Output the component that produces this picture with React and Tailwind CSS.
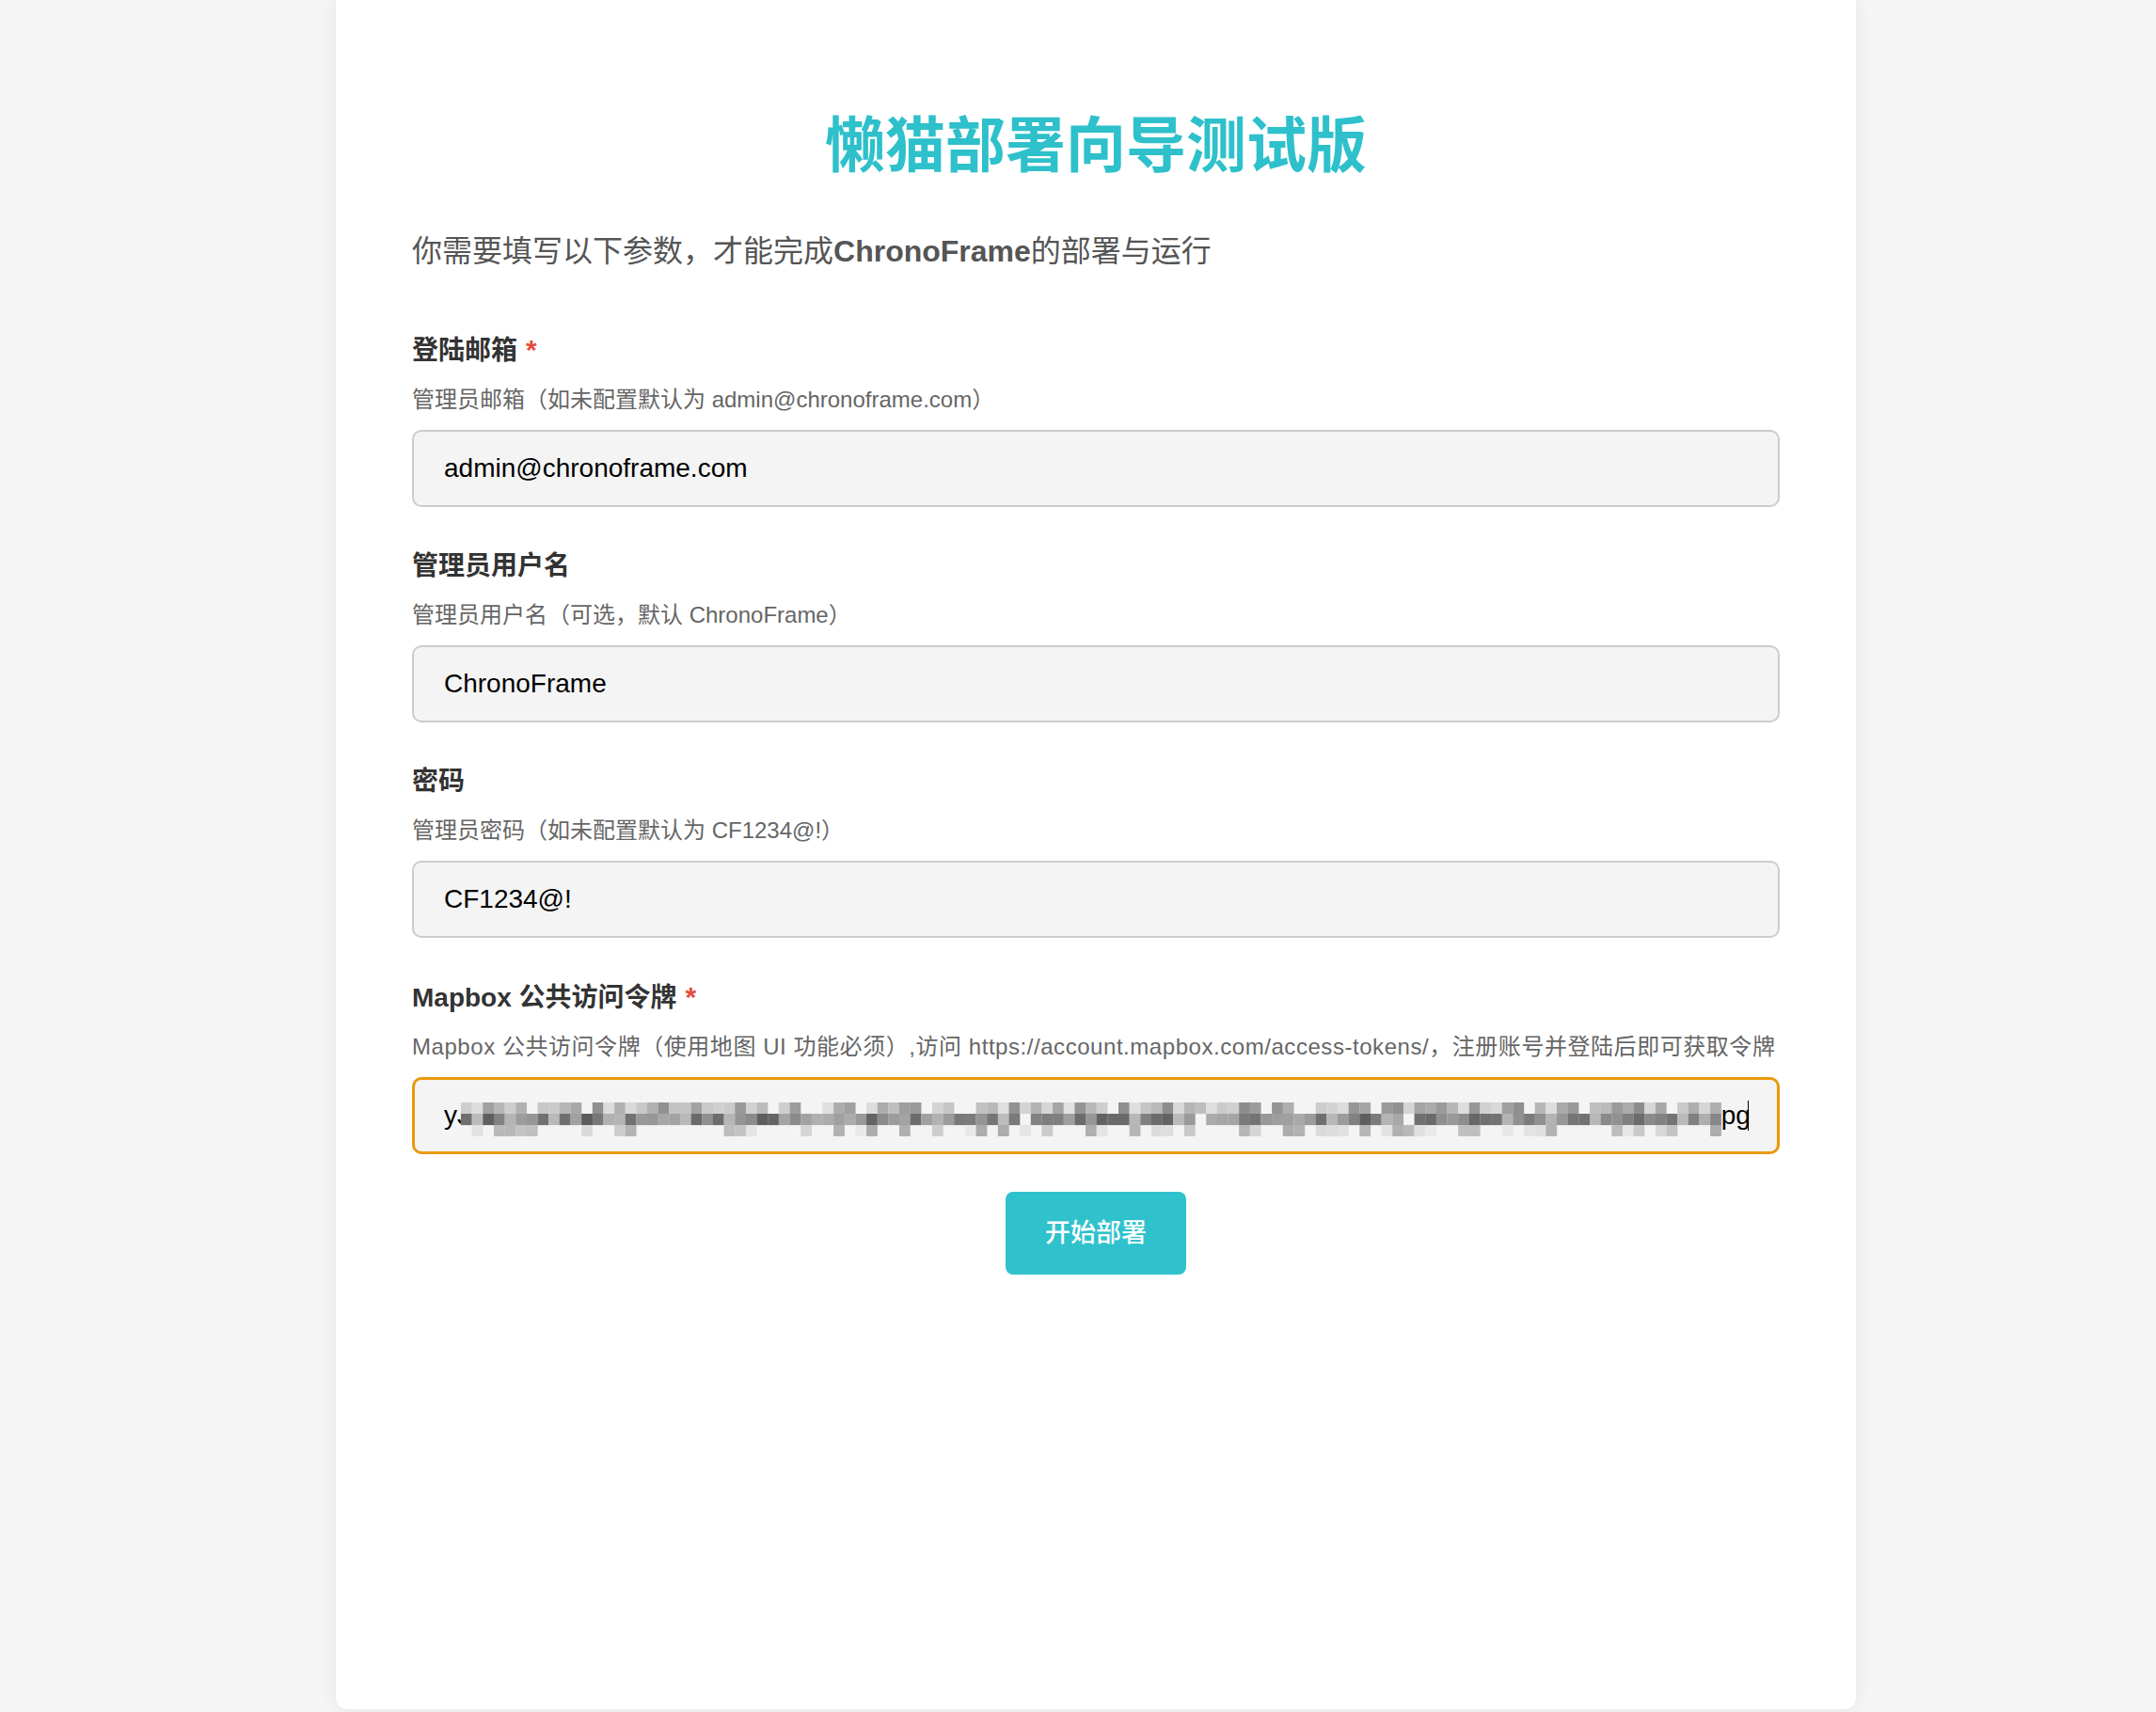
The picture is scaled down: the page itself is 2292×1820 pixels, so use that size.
import React from "react";

const font = "font-['Liberation_Sans','Noto_Sans_CJK_SC',sans-serif]";

// deterministic pseudo-random greys for the pixelated token
const makeMosaic = () => {
  let s = 20240611;
  const r = () => {
    s = (s * 1103515245 + 12345) % 2147483648;
    return s / 2147483648;
  };
  const cells = [];
  const cols = 115;
  for (let i = 0; i < cols; i++) {
    const top = r() < 0.82 ? Math.round(140 + r() * 85) : null;
    const mid = r() < 0.97 ? Math.round(90 + r() * 100) : null;
    const bot = r() < 0.4 ? Math.round(170 + r() * 65) : null;
    [top, mid, bot].forEach((v, row) => {
      if (v !== null) cells.push({ x: i * 11.65, y: row * 12, v });
    });
  }
  return { cells, width: cols * 11.65 };
};

const mosaic = makeMosaic();

const Mosaic = () => (
  <svg width={mosaic.width} height="36" className="block shrink-0 -ml-[10px]">
    {mosaic.cells.map((c, i) => (
      <rect key={i} x={c.x} y={c.y} width="11.8" height="12.1" fill={`rgb(${c.v},${c.v},${c.v})`} />
    ))}
  </svg>
);

const Label = ({ children, required }) => (
  <label className="block text-[28px] leading-[42px] font-bold text-[#333]">
    {children}
    {required && <span className="ml-[9px] text-[30px] text-[#e74c3c]">*</span>}
  </label>
);

const Hint = ({ children }) => (
  <p className="mt-[13px] text-[24px] leading-[36px] text-[#666]">{children}</p>
);

const Field = ({ label, hint, value, required, type = "text" }) => (
  <div className="mb-[42px]">
    <Label required={required}>{label}</Label>
    <Hint>{hint}</Hint>
    <input
      type={type}
      defaultValue={value}
      readOnly
      className={`${font} mt-[14px] block w-full h-[82px] rounded-[10px] border-2 border-[#cccccc] bg-[#f4f4f4] px-[32px] text-[28px] text-black outline-none`}
    />
  </div>
);

export default function App() {
  return (
    <div className={`${font} min-h-screen bg-[#f5f5f5]`}>
      <div className="ml-[357px] w-[1616px] h-[1817px] bg-white rounded-b-[12px] shadow-[0_0_18px_rgba(0,0,0,0.07)] px-[81px] pt-[117px]">
        <h1 className="text-center text-[64px] leading-[77px] font-bold text-[#2ec0cb]">懒猫部署向导测试版</h1>
        <p className="mt-[50px] text-[32px] leading-[46px] text-[#555]">
          你需要填写以下参数，才能完成<span className="font-bold">ChronoFrame</span>的部署与运行
        </p>

        <div className="mt-[61px]">
          <Field label="登陆邮箱" required hint="管理员邮箱（如未配置默认为 admin@chronoframe.com）" value="admin@chronoframe.com" />
          <Field label="管理员用户名" hint="管理员用户名（可选，默认 ChronoFrame）" value="ChronoFrame" />
          <Field label="密码" hint="管理员密码（如未配置默认为 CF1234@!）" value="CF1234@!" />

          <div className="mb-[40px]">
            <Label required>Mapbox 公共访问令牌</Label>
            <Hint>
              <span className="tracking-[0.55px] whitespace-nowrap">
                Mapbox 公共访问令牌（使用地图 UI 功能必须）,访问 https://account.mapbox.com/access-tokens/，注册账号并登陆后即可获取令牌
              </span>
            </Hint>
            <div className="mt-[14px] flex items-center w-full h-[82px] rounded-[10px] border-[3px] border-[#e8990c] bg-[#f4f4f4] px-[31px] text-[28px] text-black overflow-hidden">
              <span>yJ</span>
              <div className="mt-[8px]">
                <Mosaic />
              </div>
              <span>pg</span>
              <span className="-ml-[3px] w-[2px] h-[32px] bg-black" />
            </div>
          </div>

          <div className="flex justify-center">
            <button className="w-[192px] h-[88px] rounded-[8px] bg-[#2fc2cc] text-white text-[27px] font-medium">
              开始部署
            </button>
          </div>
        </div>
      </div>
    </div>
  );
}
